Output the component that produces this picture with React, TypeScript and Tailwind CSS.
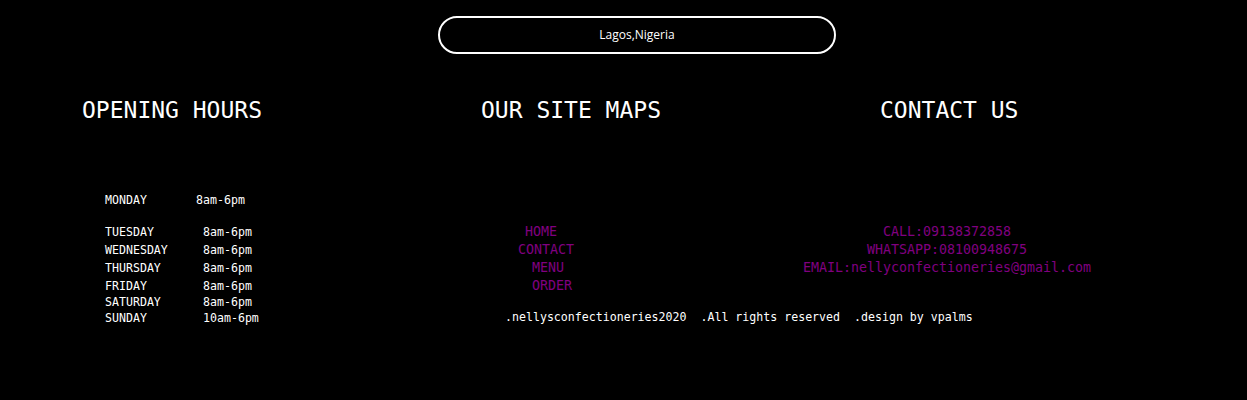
const mono = "font-['DejaVu_Sans_Mono','Liberation_Mono',monospace]";

const hours = [
  { day: "TUESDAY", time: "8am-6pm", h: "h-[18px] leading-[18px]" },
  { day: "WEDNESDAY", time: "8am-6pm", h: "h-[18px] leading-[18px]" },
  { day: "THURSDAY", time: "8am-6pm", h: "h-[18px] leading-[18px]" },
  { day: "FRIDAY", time: "8am-6pm", h: "h-[17px] leading-[18px]" },
  { day: "SATURDAY", time: "8am-6pm", h: "h-[16px] leading-[16px]" },
  { day: "SUNDAY", time: "10am-6pm", h: "h-[16px] leading-[16px]" },
];

const links = [
  { label: "HOME", ml: "ml-[44px]" },
  { label: "CONTACT", ml: "ml-[37px]" },
  { label: "MENU", ml: "ml-[51px]" },
  { label: "ORDER", ml: "ml-[51px]" },
];

const contacts = ["CALL:09138372858", "WHATSAPP:08100948675", "EMAIL:nellyconfectioneries@gmail.com"];

export default function App() {
  return (
    <div className={`h-[400px] w-full overflow-hidden bg-black text-white ${mono}`}>
      <div className="pt-[16px] pl-[438px]">
        <div className="flex h-[38px] w-[398px] items-center justify-center rounded-full border-2 border-white font-['Open_Sans',sans-serif] text-[12px] text-white">
          Lagos,Nigeria
        </div>
      </div>

      <div className="mt-[42px] flex pl-[82px] text-[23px] leading-[28px]">
        <h2 className="w-[399px] shrink-0">OPENING HOURS</h2>
        <h2 className="w-[399px] shrink-0">OUR SITE MAPS</h2>
        <h2 className="w-[399px] shrink-0">CONTACT US</h2>
      </div>

      <div className="mt-[68px] flex pl-[82px]">
        <div className="w-[399px] shrink-0 pl-[23px] text-[11.6px]">
          <div className="flex h-[16px] leading-[16px]">
            <span className="w-[91px]">MONDAY</span>
            <span>8am-6pm</span>
          </div>
          <div className="mt-[15px]">
            {hours.map((row) => (
              <div key={row.day} className={`flex ${row.h}`}>
                <span className="w-[98px]">{row.day}</span>
                <span>{row.time}</span>
              </div>
            ))}
          </div>
        </div>

        <div className="w-[399px] shrink-0 pt-[31px]">
          {links.map((link) => (
            <div key={link.label} className={`h-[18px] text-[13.3px] leading-[18px] text-[#800080] ${link.ml}`}>
              {link.label}
            </div>
          ))}
          <p className="mt-[14px] ml-[24px] h-[16px] whitespace-pre text-[11.6px] leading-[16px]">
            .nellysconfectioneries2020  .All rights reserved  .design by vpalms
          </p>
        </div>

        <div className="w-[399px] shrink-0 pt-[31px]">
          <div className="ml-[-78px] w-[290px] text-center text-[13.3px] leading-[18px] text-[#800080]">
            {contacts.map((c) => (
              <div key={c} className="h-[18px] whitespace-nowrap">{c}</div>
            ))}
          </div>
        </div>
      </div>
    </div>
  );
}
